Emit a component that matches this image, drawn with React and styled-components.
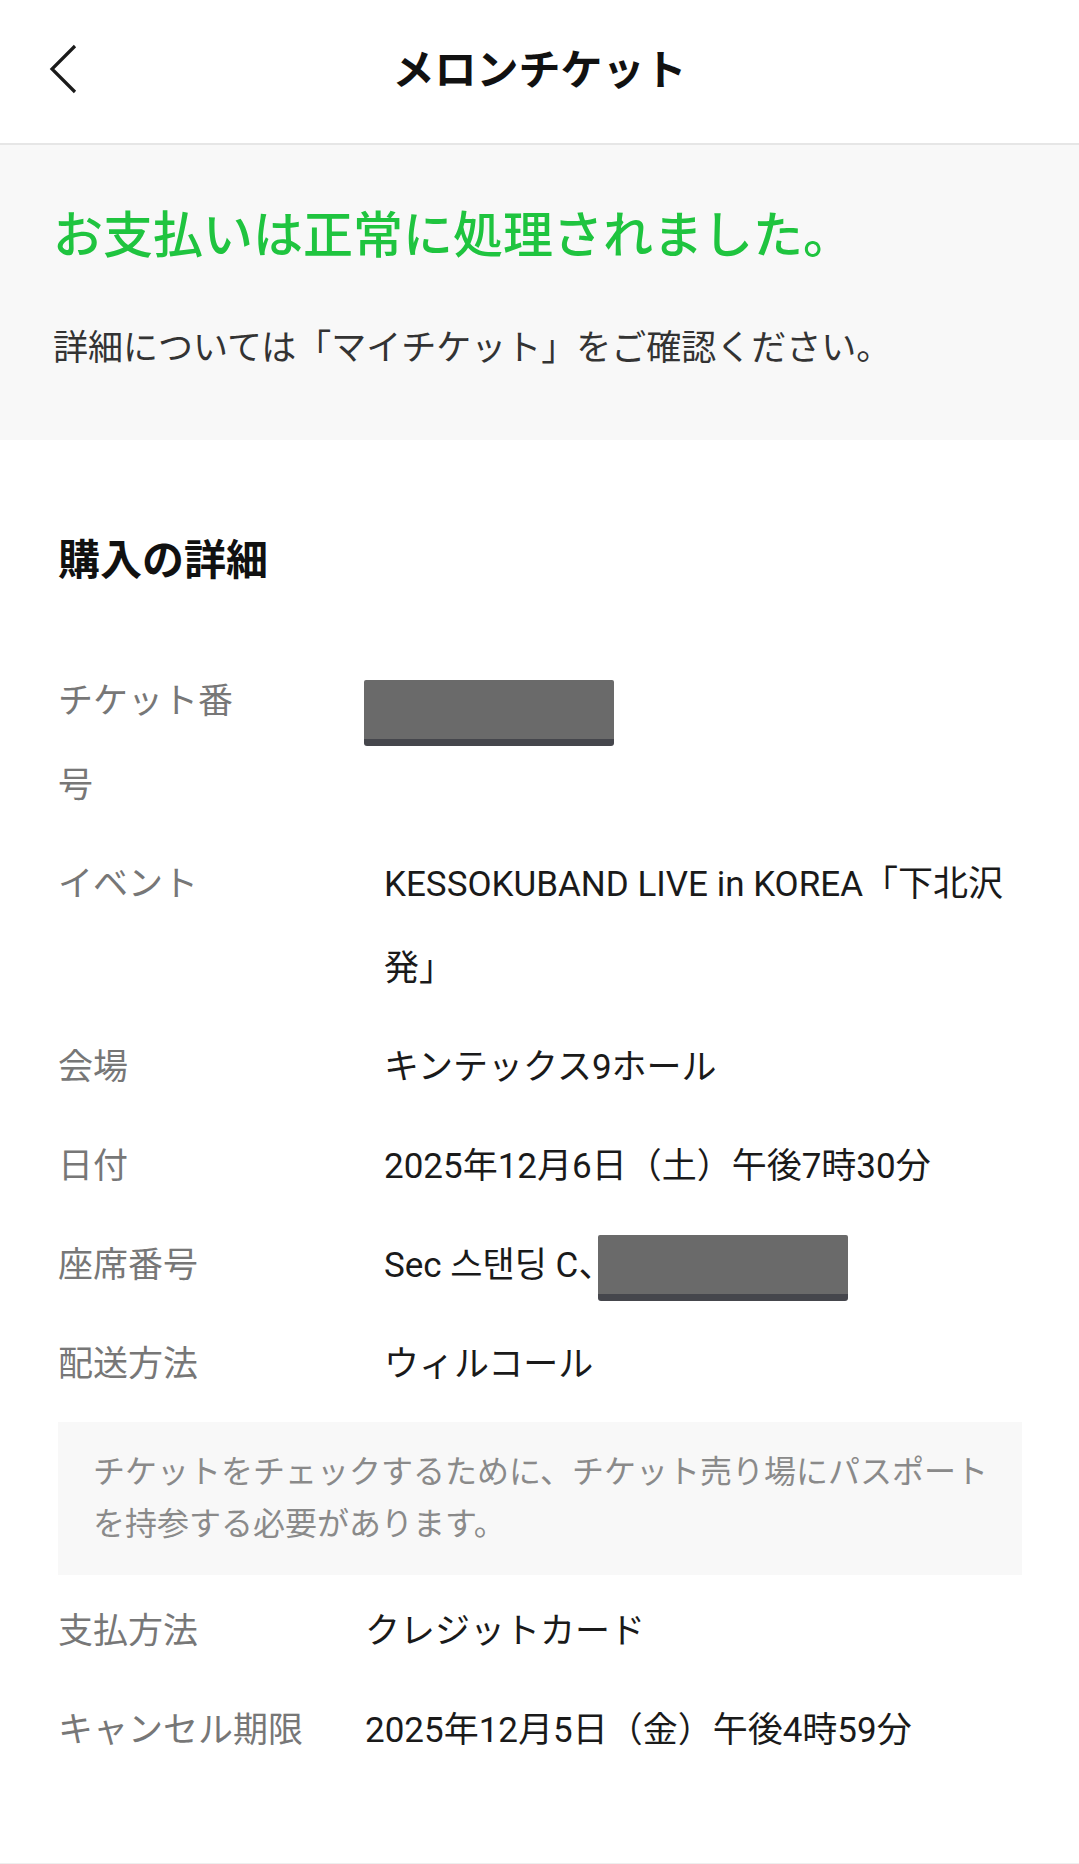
import React from 'react';
import styled, { createGlobalStyle } from 'styled-components';

const GlobalStyle = createGlobalStyle`
  body {
    margin: 0;
    background-color: #fff;
    font-family: Roboto, "Noto Sans CJK JP", "Noto Sans CJK KR", sans-serif;
  }
`;

const Page = styled.div`
  width: 100%;
  min-height: 1864px;
  background-color: #fff;
  border-bottom: 1px solid #eee;
  box-sizing: border-box;
`;

const Header = styled.header`
  display: grid;
  grid-template-columns: 1fr auto 1fr;
  align-items: center;
  height: 143px;
  border-bottom: 2px solid #e6e6e6;
`;

const BackButton = styled.button`
  justify-self: start;
  display: flex;
  align-items: center;
  padding: 0 0 0 49px;
  margin-top: -6px;
  background: none;
  border: none;
  cursor: pointer;
`;

const HeaderTitle = styled.h1`
  margin: -11px 0 0;
  font-size: 42px;
  font-weight: 700;
  color: #111;
`;

const Banner = styled.section`
  background-color: #f8f8f8;
  padding: 56px 53px 67px;
`;

const SuccessTitle = styled.h2`
  margin: 0;
  font-size: 50px;
  line-height: 70px;
  font-weight: 500;
  color: #1fc43f;
`;

const BannerText = styled.p`
  margin: 53px 0 0;
  font-size: 35px;
  line-height: 49px;
  color: #333;
`;

const Details = styled.section`
  padding: 91px 57px 0 58px;
`;

const SectionTitle = styled.h3`
  margin: 0 0 70px;
  font-size: 42px;
  line-height: 59px;
  font-weight: 700;
  color: #111;
`;

const List = styled.div`
  display: flex;
  flex-direction: column;
  gap: 15px;
`;

const Row = styled.div`
  display: flex;
  font-size: 35px;
  line-height: 84px;
`;

const Label = styled.div`
  flex: 0 0 ${(p) => p.$width}px;
  box-sizing: border-box;
  padding-right: ${(p) => p.$pad || 0}px;
  color: #777;
`;

const Value = styled.div`
  flex: 1;
  min-width: 0;
  color: #1a1a1a;
`;

const Redacted = styled.div`
  width: 250px;
  height: 66px;
  box-sizing: border-box;
  background-color: #6a6a6a;
  border-bottom: 7px solid #45464c;
  border-radius: 2px 2px 3px 3px;
  margin: ${(p) => (p.$inline ? '0 0 0 -15px' : '20px 0 0 -20px')};
  display: ${(p) => (p.$inline ? 'inline-block' : 'block')};
  vertical-align: middle;
`;

const Note = styled.div`
  background-color: #f8f8f8;
  padding: 24px 30px 25px 35px;
  font-size: 32px;
  line-height: 52px;
  color: #8a8a8a;
`;

const shipping = [
  { label: 'イベント', value: 'KESSOKUBAND LIVE in KOREA「下北沢発」' },
  { label: '会場', value: 'キンテックス9ホール' },
  { label: '日付', value: '2025年12月6日（土）午後7時30分' },
];

const payment = [
  { label: '支払方法', value: 'クレジットカード' },
  { label: 'キャンセル期限', value: '2025年12月5日（金）午後4時59分' },
];

function ChevronLeft() {
  return (
    <svg width="28" height="50" viewBox="0 0 28 50" fill="none">
      <path d="M26 2 L3 25 L26 48" stroke="#1a1a1a" strokeWidth="3.2" />
    </svg>
  );
}

export default function App() {
  return (
    <Page>
      <GlobalStyle />
      <Header>
        <BackButton aria-label="戻る">
          <ChevronLeft />
        </BackButton>
        <HeaderTitle>メロンチケット</HeaderTitle>
        <div />
      </Header>

      <Banner>
        <SuccessTitle>お支払いは正常に処理されました。</SuccessTitle>
        <BannerText>詳細については「マイチケット」をご確認ください。</BannerText>
      </Banner>

      <Details>
        <SectionTitle>購入の詳細</SectionTitle>
        <List>
          <Row>
            <Label $width={326} $pad={124}>チケット番号</Label>
            <Value>
              <Redacted />
            </Value>
          </Row>
          {shipping.map((item) => (
            <Row key={item.label}>
              <Label $width={326} $pad={124}>{item.label}</Label>
              <Value>{item.value}</Value>
            </Row>
          ))}
          <Row>
            <Label $width={326} $pad={124}>座席番号</Label>
            <Value>
              Sec 스탠딩 C、
              <Redacted $inline />
            </Value>
          </Row>
          <Row>
            <Label $width={326} $pad={124}>配送方法</Label>
            <Value>ウィルコール</Value>
          </Row>
          <Note>
            チケットをチェックするために、チケット売り場にパスポートを持参する必要があります。
          </Note>
          {payment.map((item) => (
            <Row key={item.label}>
              <Label $width={307}>{item.label}</Label>
              <Value>{item.value}</Value>
            </Row>
          ))}
        </List>
      </Details>
    </Page>
  );
}
